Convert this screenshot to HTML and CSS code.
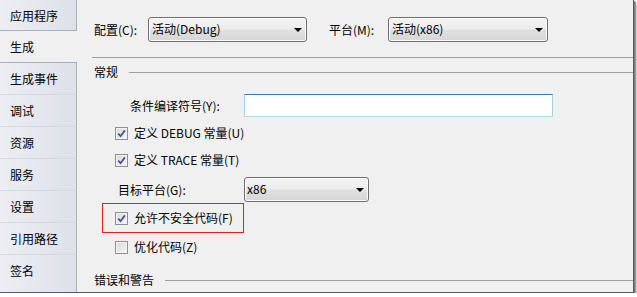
FILE: index.html
```html
<!DOCTYPE html>
<html lang="zh-CN">

<head>
    <meta charset="UTF-8">
    <title>生成</title>
    <link rel="stylesheet" href="styles.css">
</head>

<body>
    <div class="window">
        <ul class="tabs">
            <li class="tab tab-above">应用程序</li>
            <li class="tab current">生成</li>
            <li class="tab tab-below">生成事件</li>
            <li class="tab">调试</li>
            <li class="tab">资源</li>
            <li class="tab">服务</li>
            <li class="tab">设置</li>
            <li class="tab">引用路径</li>
            <li class="tab tab-last">签名</li>
        </ul>

        <div class="content">
            <!-- 配置 / 平台 -->
            <div class="config-row">
                <span class="label label-config">配置(C):</span>
                <div class="combo combo-config">活动(Debug)<i class="arrow"></i></div>
                <span class="label label-platform">平台(M):</span>
                <div class="combo combo-platform">活动(x86)<i class="arrow"></i></div>
            </div>
            <div class="sep"></div>

            <div class="group-title">常规</div>

            <div class="field-row">
                <span class="label label-symbols">条件编译符号(Y):</span>
                <div class="textbox"></div>
            </div>

            <div class="check-row row-debug">
                <span class="checkbox checked"><svg width="9" height="9" viewBox="0 0 9 9"><path d="M1.2 4.6 L3.6 7.2 L7.9 1.4" /></svg></span>
                <span class="check-label">定义 DEBUG 常量(U)</span>
            </div>
            <div class="check-row row-trace">
                <span class="checkbox checked"><svg width="9" height="9" viewBox="0 0 9 9"><path d="M1.2 4.6 L3.6 7.2 L7.9 1.4" /></svg></span>
                <span class="check-label">定义 TRACE 常量(T)</span>
            </div>

            <div class="field-row row-target">
                <span class="label label-target">目标平台(G):</span>
                <div class="combo combo-target">x86<i class="arrow"></i></div>
            </div>

            <div class="highlight">
                <div class="check-row">
                    <span class="checkbox checked"><svg width="9" height="9" viewBox="0 0 9 9"><path d="M1.2 4.6 L3.6 7.2 L7.9 1.4" /></svg></span>
                    <span class="check-label">允许不安全代码(F)</span>
                </div>
            </div>

            <div class="check-row row-optimize">
                <span class="checkbox"></span>
                <span class="check-label">优化代码(Z)</span>
            </div>

            <div class="group-title group-errors">错误和警告</div>
        </div>
    </div>
</body>

</html>
```

FILE: styles.css
```css
body,
ul,
li {
    margin: 0;
    padding: 0;
    list-style: none;
}

body {
    background: #fff;
    font-family: "Noto Sans CJK SC", "Microsoft YaHei", sans-serif;
    font-size: 12px;
    color: #000;
}

.window {
    display: flex;
    width: 634px;
    height: 293px;
    box-sizing: border-box;
    background: #f0f0f0;
    border-right: 1px solid #5a5a5a;
    border-bottom: 1px solid #5a5a5a;
    box-shadow: 1px 1px 0 #7a7a7a, 2px 2px 1px #9a9a9a, 3px 3px 2px #c8c8c8;
    overflow: hidden;
}

/* 左侧选项卡 */
.tabs {
    width: 77px;
    flex: none;
    display: flex;
    flex-direction: column;
}

.tab {
    height: 32px;
    line-height: 31px;
    padding-left: 10px;
    box-sizing: border-box;
    background: linear-gradient(to right, #eceef3, #dde1e9);
    border-right: 1px solid #a5b0c2;
    border-bottom: 1px solid #d3d8e0;
    white-space: nowrap;
}

.tab-above {
    height: 31px;
    border-bottom-color: #a5b0c2;
}

.tab.current {
    height: 31px;
    background: #f0f0f0;
    border-right: none;
    border-bottom: none;
}

.tab-below {
    border-top: 1px solid #a5b0c2;
    height: 33px;
    line-height: 31px;
}

.tab-last {
    flex: 1;
    border-bottom: none;
}

/* 右侧内容 */
.content {
    flex: 1;
    padding: 17px 0 0 15px;
}

.label {
    flex: none;
    line-height: 16px;
    white-space: nowrap;
}

.config-row {
    display: flex;
    align-items: center;
    height: 25px;
    padding-left: 2px;
}

.label-config {
    width: 54px;
}

.label-platform {
    width: 59px;
    margin-left: 22px;
}

.combo {
    position: relative;
    box-sizing: border-box;
    height: 25px;
    line-height: 22px;
    padding-left: 3px;
    border: 1px solid #707070;
    border-radius: 3px;
    background: linear-gradient(#f4f4f4 0%, #ececec 48%, #e0e0e0 52%, #d6d6d6 100%);
    box-shadow: inset 0 0 0 1px #fbfbfb;
}

.combo-config {
    width: 159px;
}

.combo-platform {
    width: 160px;
}

.arrow {
    position: absolute;
    right: 4px;
    top: 10px;
    width: 0;
    height: 0;
    border-left: 4px solid transparent;
    border-right: 4px solid transparent;
    border-top: 4px solid #000;
}

.sep {
    margin-top: 15px;
    border-top: 1px solid #a0a0a0;
}

.group-title {
    display: flex;
    align-items: center;
    height: 16px;
    line-height: 16px;
    margin-top: 6px;
    padding-left: 2px;
}

.group-title::after {
    content: "";
    flex: 1;
    margin-left: 11px;
    border-top: 1px solid #a0a0a0;
}

.group-errors {
    margin-top: 15px;
}

.field-row {
    display: flex;
    align-items: center;
    margin-top: 14px;
    padding-left: 38px;
}

.label-symbols {
    width: 114px;
}

.textbox {
    width: 309px;
    height: 23px;
    box-sizing: border-box;
    background: #fff;
    border: 1px solid #a9cce6;
    border-top-color: #3d7bad;
    border-bottom-color: #b7d9ed;
}

.row-target {
    margin-top: 7px;
    padding-left: 26px;
}

.label-target {
    width: 126px;
}

.combo-target {
    width: 125px;
    height: 25px;
    padding-left: 2px;
}

/* 复选框 */
.check-row {
    display: flex;
    align-items: center;
    height: 20px;
    padding-left: 23px;
}

.row-debug {
    margin-top: 6px;
}

.row-trace {
    margin-top: 7px;
}

.row-optimize {
    margin-top: 4px;
}

.checkbox {
    width: 13px;
    height: 13px;
    box-sizing: border-box;
    flex: none;
    display: flex;
    align-items: center;
    justify-content: center;
    border: 1px solid #8f8f8f;
    background: linear-gradient(135deg, #d8d8d8, #f7f7f7);
    box-shadow: inset 0 0 0 1px #f4f4f4;
}

.checkbox path {
    fill: none;
    stroke: #43559a;
    stroke-width: 1.8;
}

.check-label {
    margin-left: 6px;
    line-height: 16px;
    white-space: nowrap;
}

.highlight {
    width: 142px;
    height: 30px;
    box-sizing: border-box;
    margin-top: 1px;
    margin-left: 10px;
    border: 1px solid #e02020;
    display: flex;
    align-items: center;
}

.highlight .check-row {
    padding-left: 12px;
}
```
